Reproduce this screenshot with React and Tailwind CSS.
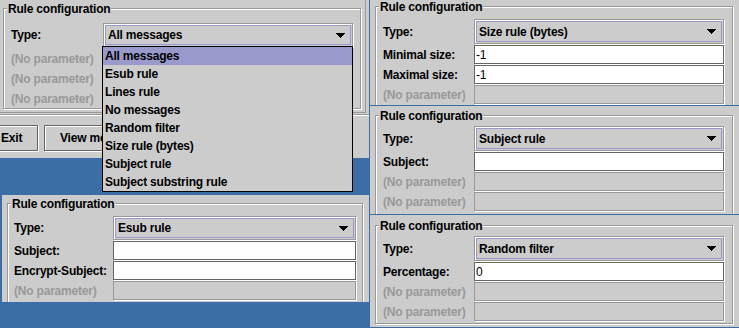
import React from 'react';

const FONT = "font-['Liberation_Sans',Arial,sans-serif] text-[12px] tracking-[-0.2px] font-bold text-black";

function Arrow() {
  return (
    <svg width="9" height="5" viewBox="0 0 9 5" shapeRendering="crispEdges">
      <rect x="0" y="0" width="9" height="1" fill="#000" />
      <rect x="1" y="1" width="7" height="1" fill="#000" />
      <rect x="2" y="2" width="5" height="1" fill="#000" />
      <rect x="3" y="3" width="3" height="1" fill="#000" />
      <rect x="4" y="4" width="1" height="1" fill="#000" />
    </svg>
  );
}

function Combo({ value, className = 'h-[25px] w-[250px]' }) {
  return (
    <div className={`${className} shrink-0 border border-[#999] shadow-[inset_1px_1px_0_#fff,1px_1px_0_#fff] p-px`}>
      <div className="h-full border border-[#9999cc] flex items-center justify-between pl-[2px] pr-[5px]">
        <span>{value}</span>
        <Arrow />
      </div>
    </div>
  );
}

function Field({ value, disabled, className = 'w-[250px]' }) {
  if (disabled) {
    return <div className={`${className} h-[19px] shrink-0 border border-[#999] shadow-[1px_1px_0_#fff]`} />;
  }
  return (
    <div className={`${className} h-[19px] shrink-0 border border-[#666] bg-white shadow-[1px_1px_0_#fff] pl-px flex items-center font-normal`}>
      {value}
    </div>
  );
}

function Row({ label, disabled, w, children }) {
  return (
    <div className="flex items-center">
      <div className={`${w} shrink-0 ${disabled ? 'text-[#999]' : ''}`}>{label}</div>
      {children}
    </div>
  );
}

function Group({ className, children }) {
  return (
    <div className={`relative border border-[#999] shadow-[inset_1px_1px_0_#fff,1px_1px_0_#fff] ${className}`}>
      <div className="absolute left-[3px] -top-[7px] bg-[#ccc] px-px leading-[14px]">Rule configuration</div>
      {children}
    </div>
  );
}

const ITEMS = [
  'All messages',
  'Esub rule',
  'Lines rule',
  'No messages',
  'Random filter',
  'Size rule (bytes)',
  'Subject rule',
  'Subject substring rule',
];

function Popup() {
  return (
    <div className="absolute left-[102px] top-[46px] w-[251px] border border-black bg-[#ccc] z-10">
      {ITEMS.map((it, i) => (
        <div key={it} className={`h-[18px] flex items-center pl-[2px] ${i === 0 ? 'bg-[#9999cc]' : ''}`}>
          {it}
        </div>
      ))}
    </div>
  );
}

function TopLeft() {
  return (
    <div className="h-[158px] bg-[#ccc] flex flex-col">
      <div className="w-[366px] h-[113px] border-r border-b border-[#999] pt-[8px] pl-[3px]">
        <Group className="w-[358px] h-[101px] pt-[14px] pl-[7px]">
          <div className="flex flex-col gap-[2px]">
            <Row label="Type:" w="w-[92px]">
              <Combo value="All messages" className="h-[24px] w-[250px]" />
            </Row>
            <div className="flex flex-col gap-px">
              <Row label="(No parameter)" disabled w="w-[92px]"><Field disabled className="w-[249px]" /></Row>
              <Row label="(No parameter)" disabled w="w-[92px]"><Field disabled className="w-[249px]" /></Row>
              <Row label="(No parameter)" disabled w="w-[92px]"><Field disabled className="w-[249px]" /></Row>
            </div>
          </div>
        </Group>
      </div>
      <div className="mt-px h-[2px] border-t border-b border-t-[#999] border-b-white" />
      <div className="mt-[9px] w-[102px] h-[27px] overflow-hidden flex gap-[6px]">
        <button className="-ml-[16px] w-[54px] h-[26px] shrink-0 border border-[#666] shadow-[inset_1px_1px_0_#fff,1px_1px_0_#fff] bg-[#ccc] pl-[16px] text-left">
          Exit
        </button>
        <button className="h-[26px] w-[140px] shrink-0 border border-[#666] shadow-[inset_1px_1px_0_#fff,1px_1px_0_#fff] bg-[#ccc] pl-[15px] text-left whitespace-nowrap">
          View messages
        </button>
      </div>
    </div>
  );
}

function BottomLeft() {
  const w = 'w-[99px]';
  return (
    <div className="mt-[37px] ml-[2px] w-[367px] h-[107px] bg-[#ccc] overflow-hidden pt-[8px] pl-[5px]">
      <Group className="w-[356px] h-[120px] pt-[12px] pl-[6px]">
        <div className="flex flex-col gap-px">
          <Row label="Type:" w={w}><Combo value="Esub rule" className="h-[24px] w-[243px]" /></Row>
          <Row label="Subject:" w={w}><Field className="w-[243px]" /></Row>
          <Row label="Encrypt-Subject:" w={w}><Field className="w-[243px]" /></Row>
          <Row label="(No parameter)" disabled w={w}><Field disabled className="w-[243px]" /></Row>
        </div>
      </Group>
    </div>
  );
}

function RightPanel({ outer, inner, type, rows }) {
  const w = 'w-[91px]';
  return (
    <div className={`bg-[#ccc] overflow-hidden pl-[5px] ${outer}`}>
      <Group className={`w-[358px] pl-[7px] ${inner}`}>
        <div className="flex flex-col gap-px">
          <Row label="Type:" w={w}><Combo value={type} /></Row>
          {rows.map((r, i) => (
            <Row key={i} label={r.label} disabled={r.disabled} w={w}>
              <Field value={r.value} disabled={r.disabled} />
            </Row>
          ))}
        </div>
      </Group>
    </div>
  );
}

export default function App() {
  return (
    <div className={`w-[739px] h-[328px] bg-[#3a6ea5] flex gap-px overflow-hidden ${FONT}`}>
      <div className="relative w-[369px] flex flex-col">
        <TopLeft />
        <BottomLeft />
        <Popup />
      </div>
      <div className="w-[369px] flex flex-col gap-px">
        <RightPanel
          outer="h-[105px] pt-[6px]"
          inner="h-[140px] pt-[12px]"
          type="Size rule (bytes)"
          rows={[
            { label: 'Minimal size:', value: '-1' },
            { label: 'Maximal size:', value: '-1' },
            { label: '(No parameter)', disabled: true },
          ]}
        />
        <RightPanel
          outer="h-[108px] pt-[9px]"
          inner="h-[140px] pt-[10px]"
          type="Subject rule"
          rows={[
            { label: 'Subject:', value: '' },
            { label: '(No parameter)', disabled: true },
            { label: '(No parameter)', disabled: true },
          ]}
        />
        <RightPanel
          outer="h-[112px] pt-[10px]"
          inner="h-[99px] pt-[10px]"
          type="Random filter"
          rows={[
            { label: 'Percentage:', value: '0' },
            { label: '(No parameter)', disabled: true },
            { label: '(No parameter)', disabled: true },
          ]}
        />
      </div>
    </div>
  );
}
